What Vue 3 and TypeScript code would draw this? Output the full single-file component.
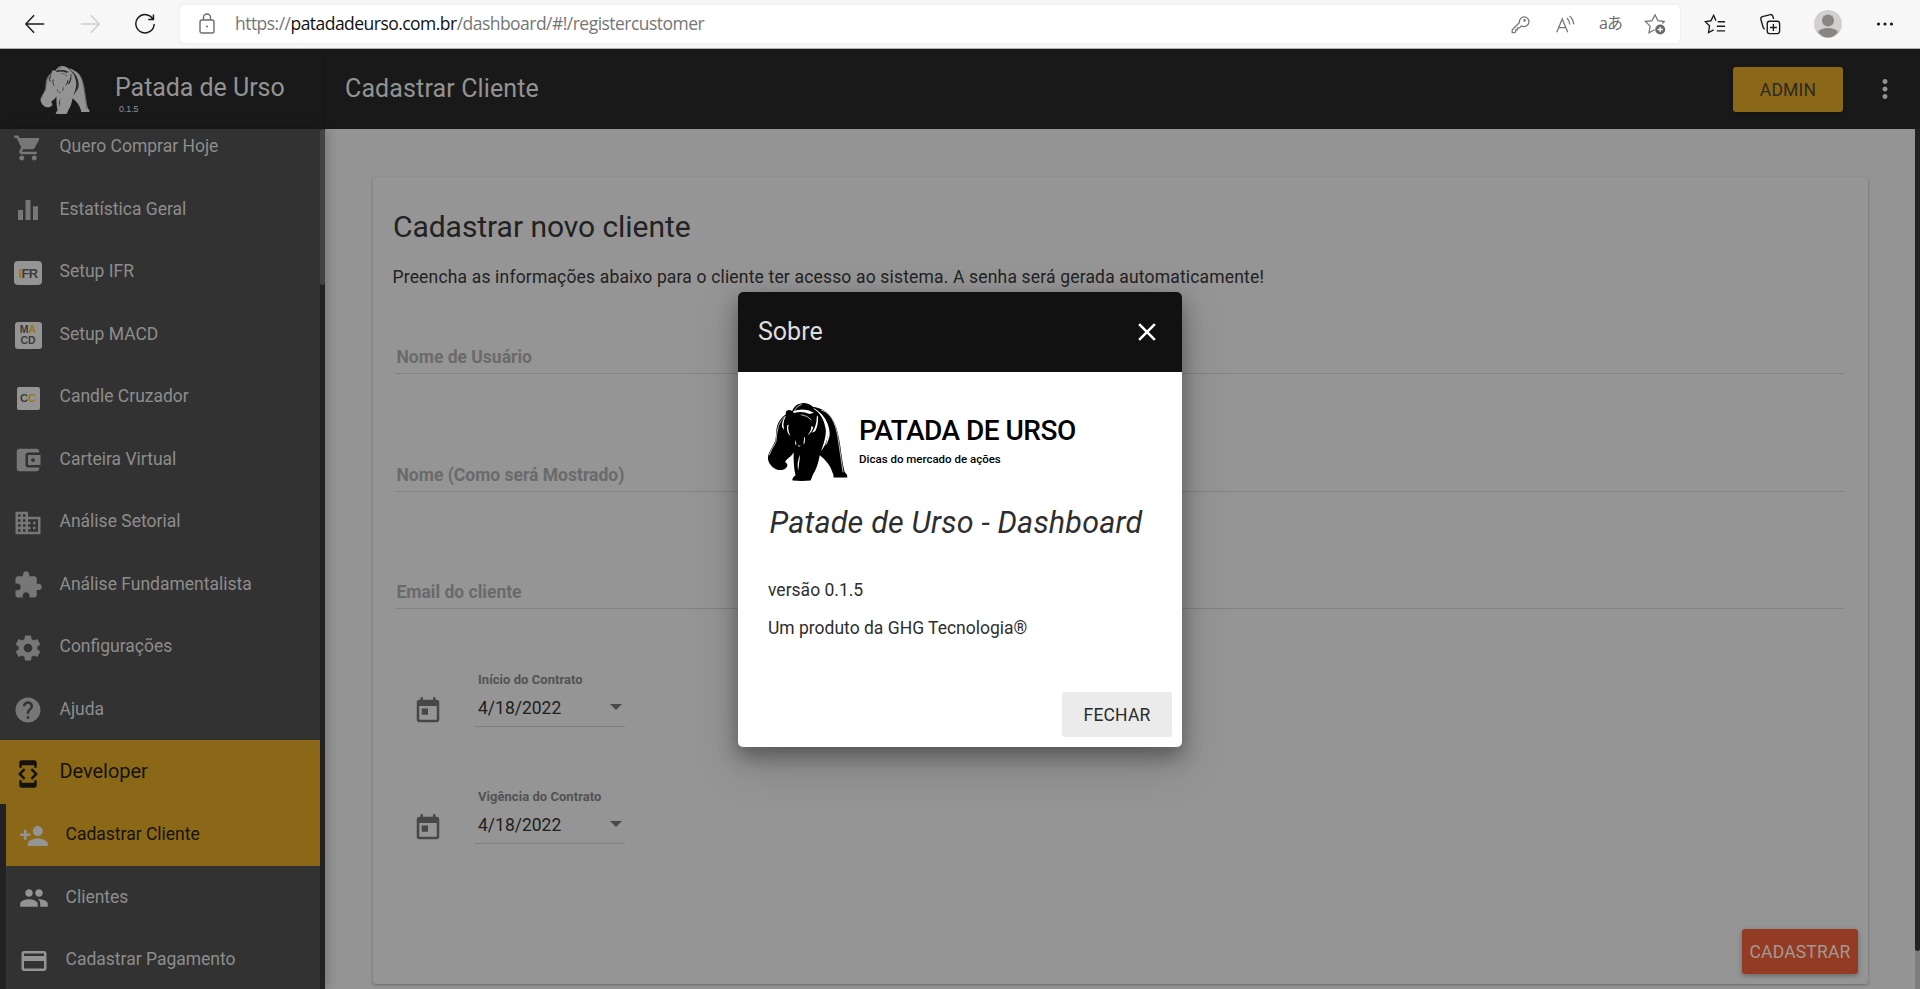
<script setup lang="ts">
interface NavItem {
  label: string
  path?: string
  tile?: 'ifr' | 'macd' | 'cc'
}

const items: NavItem[] = [
  { label: 'Quero Comprar Hoje', path: 'M7 18c-1.1 0-1.99.9-1.99 2S5.9 22 7 22s2-.9 2-2-.9-2-2-2zM1 2v2h2l3.6 7.59-1.35 2.45c-.16.28-.25.61-.25.96 0 1.1.9 2 2 2h12v-2H7.42c-.14 0-.25-.11-.25-.25l.03-.12.9-1.63h7.45c.75 0 1.41-.41 1.75-1.03l3.58-6.49c.08-.14.12-.31.12-.48 0-.55-.45-1-1-1H5.21l-.94-2H1zm16 16c-1.1 0-1.99.9-1.99 2s.89 2 1.99 2 2-.9 2-2-.9-2-2-2z' },
  { label: 'Estatística Geral', path: 'M4 20h4v-8H4v8zM10 20h4V4h-4v16zM16 9v11h4V9h-4z' },
  { label: 'Setup IFR', tile: 'ifr' },
  { label: 'Setup MACD', tile: 'macd' },
  { label: 'Candle Cruzador', tile: 'cc' },
  { label: 'Carteira Virtual', path: 'M21 18v1c0 1.1-.9 2-2 2H5c-1.11 0-2-.9-2-2V5c0-1.1.89-2 2-2h14c1.1 0 2 .9 2 2v1h-9c-1.11 0-2 .9-2 2v8c0 1.1.89 2 2 2h9zm-9-2h10V8H12v8zm4-2.5c-.83 0-1.5-.67-1.5-1.5s.67-1.5 1.5-1.5 1.5.67 1.5 1.5-.67 1.5-1.5 1.5z' },
  { label: 'Análise Setorial', path: 'M12 7V3H2v18h20V7H12zM6 19H4v-2h2v2zm0-4H4v-2h2v2zm0-4H4V9h2v2zm0-4H4V5h2v2zm4 12H8v-2h2v2zm0-4H8v-2h2v2zm0-4H8V9h2v2zm0-4H8V5h2v2zm10 12h-8v-2h2v-2h-2v-2h2v-2h-2V9h8v10zm-2-8h-2v2h2v-2zm0 4h-2v2h2v-2z' },
  { label: 'Análise Fundamentalista', path: 'M20.5 11H19V7c0-1.1-.9-2-2-2h-4V3.5C13 2.12 11.88 1 10.5 1S8 2.12 8 3.5V5H4c-1.1 0-1.99.9-1.99 2v3.8H3.5c1.49 0 2.7 1.21 2.7 2.7s-1.21 2.7-2.7 2.7H2V20c0 1.1.9 2 2 2h3.8v-1.5c0-1.49 1.21-2.7 2.7-2.7 1.49 0 2.7 1.21 2.7 2.7V22H17c1.1 0 2-.9 2-2v-4h1.5c1.38 0 2.5-1.12 2.5-2.5S21.88 11 20.5 11z' },
  { label: 'Configurações', path: 'M19.43 12.98c.04-.32.07-.64.07-.98s-.03-.66-.07-.98l2.11-1.65c.19-.15.24-.42.12-.64l-2-3.46c-.12-.22-.39-.3-.61-.22l-2.49 1c-.52-.4-1.08-.73-1.69-.98l-.38-2.65C14.46 2.18 14.25 2 14 2h-4c-.25 0-.46.18-.49.42l-.38 2.65c-.61.25-1.17.59-1.69.98l-2.49-1c-.23-.09-.49 0-.61.22l-2 3.46c-.13.22-.07.49.12.64l2.11 1.65c-.04.32-.07.65-.07.98s.03.66.07.98l-2.11 1.65c-.19.15-.24.42-.12.64l2 3.46c.12.22.39.3.61.22l2.49-1c.52.4 1.08.73 1.69.98l.38 2.65c.03.24.24.42.49.42h4c.25 0 .46-.18.49-.42l.38-2.65c.61-.25 1.17-.59 1.69-.98l2.49 1c.23.09.49 0 .61-.22l2-3.46c.12-.22.07-.49-.12-.64l-2.11-1.65zM12 15.5c-1.93 0-3.5-1.57-3.5-3.5s1.57-3.5 3.5-3.5 3.5 1.57 3.5 3.5-1.57 3.5-3.5 3.5z' },
  { label: 'Ajuda', path: 'M12 2C6.48 2 2 6.48 2 12s4.48 10 10 10 10-4.48 10-10S17.52 2 12 2zm1 17h-2v-2h2v2zm2.07-7.75l-.9.92C13.45 12.9 13 13.5 13 15h-2v-.5c0-1.1.45-2.1 1.17-2.83l1.24-1.26c.37-.36.59-.86.59-1.41 0-1.1-.9-2-2-2s-2 .9-2 2H8c0-2.21 1.79-4 4-4s4 1.79 4 4c0 .88-.36 1.68-.93 2.25z' },
]

const children = [
  { label: 'Cadastrar Cliente', active: true, path: 'M15 12c2.21 0 4-1.79 4-4s-1.79-4-4-4-4 1.79-4 4 1.79 4 4 4zm-9-2V7H4v3H1v2h3v3h2v-3h3v-2H6zm9 4c-2.67 0-8 1.34-8 4v2h16v-2c0-2.66-5.33-4-8-4z' },
  { label: 'Clientes', active: false, path: 'M16 11c1.66 0 2.99-1.34 2.99-3S17.66 5 16 5c-1.66 0-3 1.34-3 3s1.34 3 3 3zm-8 0c1.66 0 2.99-1.34 2.99-3S9.66 5 8 5C6.34 5 5 6.34 5 8s1.34 3 3 3zm0 2c-2.33 0-7 1.17-7 3.5V19h14v-2.5c0-2.33-4.67-3.5-7-3.5zm8 0c-.29 0-.62.02-.97.05 1.16.84 1.97 1.97 1.97 3.45V19h6v-2.5c0-2.33-4.67-3.5-7-3.5z' },
  { label: 'Cadastrar Pagamento', active: false, path: 'M20 4H4c-1.11 0-1.99.89-1.99 2L2 18c0 1.11.89 2 2 2h16c1.11 0 2-.89 2-2V6c0-1.11-.89-2-2-2zm0 14H4v-6h16v6zm0-10H4V6h16v2z' },
]

const fields = ['Nome de Usuário', 'Nome (Como será Mostrado)', 'Email do cliente']
const dates = [
  { label: 'Início do Contrato', value: '4/18/2022' },
  { label: 'Vigência do Contrato', value: '4/18/2022' },
]
</script>

<template>
  <div class="window">
    <svg class="defs" width="0" height="0">
      <symbol id="bear" viewBox="22 20 247 241">
        <path class="fur" d="M130 22C142 21 154 26 163 34C182 36 203 45 216 62C232 82 240 115 245 150C250 185 254 215 259 232Q268 240 267 249L225 249Q226 241 222 234C216 214 202 196 183 181C180 196 176 214 168 230C161 240 160 248 155 258Q128 261 100 258Q97 251 109 242C104 222 103 200 103 172C98 182 91 187 84 192Q77 197 78 203Q87 207 83 215Q78 225 66 226C47 228 29 212 25 193C23 176 38 160 47 137C51 120 49 104 53 91C59 74 70 63 79 57Q78 44 88 43Q95 43 99 46C103 33 116 22 130 22Z" />
        <path class="cut" d="M101 47Q135 34 165 51L152 55Q128 45 105 52Z" />
        <path class="cut" d="M167 38C194 55 215 82 208 119C204 143 195 157 187 168C196 144 203 120 201 102C197 72 183 50 163 38Z" />
        <path class="cut" d="M180 49C201 67 215 95 213 120C211 133 205 145 200 153C205 137 209 119 207 101C204 81 193 62 180 49Z" />
        <path class="cut" d="M177 60Q180 86 169 108L159 112Q174 91 174 62Z" />
        <path class="cut" d="M76 64Q66 79 68 95L74 104L72 87Q73 72 80 61Z" />
        <path class="cut" d="M84 89Q81 105 87 115L94 122Q84 105 88 88Z" />
        <path class="cut" d="M158 91L163 96Q159 108 153 114L145 121Q156 109 158 91Z" />
        <path class="cut" d="M107 133L112 145L109 151ZM138 124L137 143L133 148L135 128ZM114 148Q120 153 127 151L119 155Z" />
        <path class="cut" d="M123 179Q112 203 117 228Q120 205 123 179Z" />
        <path class="cut-line" d="M187 43C225 53 235 100 241 144L254 233M29 180Q34 165 49 141Q51 112 57 91Q64 74 77 62M104 51Q110 31 128 26M125 57Q146 60 157 73" />
      </symbol>
    </svg>

    <div class="browser">
      <svg class="nav-icon back" viewBox="0 0 24 24"><path d="M22 12H2M11 2.5L2 12l9 9.500" /></svg>
      <svg class="nav-icon forward" viewBox="0 0 24 24"><path d="M2 12h20M13 2.500l9 9.500-9 9.500" /></svg>
      <svg class="nav-icon reload" viewBox="0 0 24 24"><path d="M20.800 7A10 10 0 1 0 22 12M21.200 1.500V7.200H15.500" /></svg>
      <div class="address">
        <svg class="lock" viewBox="0 0 16 21"><rect x="1" y="7" width="14" height="13" rx="2" /><path d="M4.500 7V4.500a3.500 3.500 0 0 1 7 0V7" /><circle cx="8" cy="13.500" r="1" /></svg>
        <span class="url">https://<b>patadadeurso.com.br</b>/dashboard/#!/registercustomer</span>
        <div class="address-tools">
          <svg viewBox="0 0 24 24"><path d="M11.400 10.300A5.200 5.200 0 1 1 15 14.500l-1.500-.4-2 2.200H9.300V18.500H7.200V20.600L5.900 21.500H3.500V18.300z" /><circle cx="17" cy="8" r=".8" /></svg>
          <svg viewBox="0 0 24 24"><path d="M3 21L9 6.500 15 21M5.200 16h7.600M14 5.500q3 2.500 3.300 7M17 3.200q4 3.300 4.400 9" /></svg>
          <span class="translate">aあ</span>
          <svg viewBox="0 0 24 24"><path d="M11.500 18.300L5.500 21.500 6.700 14.300 1.500 9.300 8.700 8.300 12 2 15.200 8.300 22 9.300 20 11.500" /><circle class="solid" cx="17.700" cy="18" r="5.500" /><path class="plus" d="M14.900 18h5.600M17.700 15.200v5.600" /></svg>
        </div>
      </div>
      <div class="browser-tools">
        <svg viewBox="0 0 24 24"><path d="M13 8.300L10.500 2.500 7.500 8.500 1.500 9.400 6 14 5 21.300 10.500 18.300M15 9.500h8M14 14.500h9M14 19.500h9" /></svg>
        <svg viewBox="0 0 24 24"><rect x="9" y="9" width="13.500" height="13.500" rx="2.500" /><path d="M15.700 12v7.500M12 15.800h7.500M6.300 17.500Q5 17 4.500 15.500L2 6.800Q1.600 4.600 3.700 3.900L12.500 1.700Q14.300 1.500 15 3.200L16 6.500" /></svg>
        <svg class="avatar" viewBox="0 0 28 28"><circle class="avatar-bg" cx="14" cy="14" r="14" /><circle class="avatar-fg" cx="14" cy="10.500" r="6" /><path class="avatar-fg" d="M4 22Q7 18 14 18T24 22Q20 27.500 14 27.500T4 22Z" /></svg>
        <svg class="more" viewBox="0 0 24 24"><circle cx="5.500" cy="12" r="1.600" /><circle cx="12" cy="12" r="1.600" /><circle cx="18.500" cy="12" r="1.600" /></svg>
      </div>
    </div>

    <header class="topbar">
      <div class="brand">
        <svg class="brand-logo"><use href="#bear" /></svg>
        <div class="brand-text">
          <span class="brand-name">Patada de Urso</span>
          <span class="brand-version">0.1.5</span>
        </div>
      </div>
      <h1>Cadastrar Cliente</h1>
      <button class="admin">ADMIN</button>
      <svg class="kebab" viewBox="0 0 24 24"><path d="M12 8c1.100 0 2-.9 2-2s-.9-2-2-2-2 .9-2 2 .9 2 2 2zm0 2c-1.100 0-2 .9-2 2s.9 2 2 2 2-.9 2-2-.9-2-2-2zm0 6c-1.100 0-2 .9-2 2s.9 2 2 2 2-.9 2-2-.9-2-2-2z" /></svg>
    </header>

    <div class="body">
      <nav class="sidebar">
        <div class="menu">
          <div v-for="item in items" :key="item.label" class="item">
            <span class="icon">
              <svg v-if="item.path" viewBox="0 0 24 24"><path :d="item.path" /></svg>
              <span v-else-if="item.tile === 'ifr'" class="tile ifr"><i>I</i>FR</span>
              <span v-else-if="item.tile === 'macd'" class="tile macd"><span>M<i>A</i></span><span>CD</span></span>
              <span v-else class="tile cc">C<i>C</i></span>
            </span>
            <span class="label">{{ item.label }}</span>
          </div>
          <div class="item developer">
            <span class="icon"><svg viewBox="0 0 24 24"><path d="M7 5h10v2h2V3c0-1.100-.9-1.990-2-1.990L7 1c-1.100 0-2 .9-2 2v4h2V5zm8.410 11.590L20 12l-4.590-4.590L14 8.830 17.170 12 14 15.170l1.410 1.420zM10 15.170L6.830 12 10 8.830 8.590 7.410 4 12l4.590 4.590L10 15.170zM17 19H7v-2H5v4c0 1.100.9 2 2 2h10c1.100 0 2-.9 2-2v-4h-2v2z" /></svg></span>
            <span class="label">Developer</span>
          </div>
          <div class="submenu">
            <div v-for="c in children" :key="c.label" class="item" :class="{ active: c.active }">
              <span class="icon"><svg viewBox="0 0 24 24"><path :d="c.path" /></svg></span>
              <span class="label">{{ c.label }}</span>
            </div>
          </div>
        </div>
        <div class="track"><div class="thumb"></div></div>
      </nav>

      <main class="content">
        <section class="card">
          <h2>Cadastrar novo cliente</h2>
          <p class="intro">Preencha as informações abaixo para o cliente ter acesso ao sistema. A senha será gerada automaticamente!</p>
          <div class="fields">
            <div v-for="f in fields" :key="f" class="field">{{ f }}</div>
          </div>
          <div class="dates">
            <div v-for="d in dates" :key="d.label" class="date-row">
              <svg class="calendar" viewBox="0 0 24 24"><path d="M19 3h-1V1h-2v2H8V1H6v2H5c-1.110 0-1.990.9-1.990 2L3 19c0 1.100.89 2 2 2h14c1.100 0 2-.9 2-2V5c0-1.100-.9-2-2-2zm0 16H5V8h14v11zM7 10h5v5H7z" /></svg>
              <div class="date">
                <span class="date-label">{{ d.label }}</span>
                <div class="date-value"><span>{{ d.value }}</span><span class="caret"></span></div>
              </div>
            </div>
          </div>
          <button class="submit">CADASTRAR</button>
        </section>
      </main>
      <div class="page-track"><div class="page-thumb"></div></div>
    </div>

    <div class="dialog">
      <div class="dialog-head">
        <span>Sobre</span>
        <svg viewBox="0 0 24 24"><path d="M19 6.410L17.590 5 12 10.590 6.410 5 5 6.410 10.590 12 5 17.590 6.410 19 12 13.410 17.590 19 19 17.590 13.410 12z" /></svg>
      </div>
      <div class="dialog-body">
        <div class="logo">
          <svg class="logo-bear"><use href="#bear" /></svg>
          <div class="logo-text"><strong>PATADA DE URSO</strong><span>Dicas do mercado de ações</span></div>
        </div>
        <h3>Patade de Urso - Dashboard</h3>
        <p>versão 0.1.5</p>
        <p>Um produto da GHG Tecnologia®</p>
      </div>
      <div class="dialog-actions"><button>FECHAR</button></div>
    </div>
  </div>
</template>

<style>
body { margin: 0; overflow: hidden; }
</style>

<style scoped>
.window { position: relative; display: flex; flex-direction: column; width: 1920px; height: 989px; overflow: hidden; font-family: Roboto, "Liberation Sans", sans-serif; font-size: 17.5px; background: #949494; }
.window * { box-sizing: border-box; }
.defs { position: absolute; }
.fur { fill: var(--fur); }
.cut { fill: var(--cut); }
.cut-line { fill: none; stroke: var(--cut); stroke-width: 2.2; }
h1, h2, h3, p { margin: 0; font-weight: 400; }
button { border: 0; font: inherit; letter-spacing: .175px; border-radius: 3px; height: 45px; padding: 0; }

.browser { flex: none; display: flex; align-items: center; height: 49px; background: #f7f7f7; border-bottom: 1px solid #b1b3b3; }
.nav-icon { width: 22px; height: 22px; fill: none; stroke: #1b1b1b; stroke-width: 1.6; flex: none; margin-top: -1px; }
.back { margin-left: 24px; }
.forward { margin-left: 33px; stroke: #cfcfcf; }
.reload { margin-left: 33px; }
.address { display: flex; align-items: center; width: 1500px; height: 38px; margin-left: 24px; padding: 0 14px 0 19px; background: #fff; border-radius: 5px; box-shadow: 0 0 3px rgba(0,0,0,.08); }
.lock { width: 16px; height: 21px; margin-top: -1px; fill: none; stroke: #6c6c6c; stroke-width: 1.4; }
.lock circle { fill: #6c6c6c; stroke: none; }
.url { margin: -2px 0 0 20px; font-family: "Open Sans", "Noto Sans", sans-serif; font-size: 17.5px; letter-spacing: -.53px; color: #767676; white-space: nowrap; }
.url b { font-weight: 400; color: #111; }
.address-tools { display: flex; align-items: center; gap: 23px; margin-left: auto; }
.address-tools svg { width: 22px; height: 22px; fill: none; stroke: #767676; stroke-width: 1.4; }
.address-tools svg .solid { fill: #6b6b6b; stroke: none; }
.address-tools svg .plus { stroke: #fff; stroke-width: 1.4; }
.translate { width: 22px; margin-top: -3px; font: 16px/20px "Open Sans", "Noto Sans CJK JP", sans-serif; letter-spacing: -1px; color: #6b6b6b; white-space: nowrap; }
.browser-tools { display: flex; align-items: center; margin-left: 24px; }
.browser-tools svg { width: 22px; height: 22px; fill: none; stroke: #1b1b1b; stroke-width: 1.5; }
.browser-tools svg + svg { margin-left: 33px; }
.browser-tools .more { width: 24px; height: 24px; margin-left: 31px; fill: #1b1b1b; stroke: none; }
.browser-tools .avatar { width: 28px; height: 28px; stroke: none; }
.avatar-bg { fill: #d2d0ce; }
.avatar-fg { fill: #8a8583; }

.topbar { position: relative; z-index: 1; flex: none; display: flex; align-items: center; height: 80px; background: #191919; color: #939393; }
.brand { display: flex; align-items: center; width: 325px; height: 80px; padding-left: 40px; border-right: 1px solid #161616; }
.brand-logo { --fur: #939393; --cut: #222; width: 50px; height: 50px; margin-top: 2px; }
.brand-text { display: flex; flex-direction: column; margin-left: 25px; padding-top: 10px; }
.brand-name { font-size: 25px; line-height: 30px; letter-spacing: -.05px; }
.brand-version { font: 8.75px/12px "Liberation Sans", sans-serif; padding: 0 0 1px 4px; }
h1 { margin-left: 20px; font-size: 25px; line-height: 30px; letter-spacing: .125px; }
.admin { width: 110px; margin-left: auto; padding-top: 1px; background: #8b6817; color: #2b2a24; box-shadow: 0 2px 5px rgba(0,0,0,.26); }
.kebab { width: 30px; height: 30px; margin: 0 20px 0 27px; fill: #939393; }

.body { flex: 1; display: flex; min-height: 0; }
.sidebar { position: relative; z-index: 1; display: flex; width: 325px; background: #323232; box-shadow: 2px 0 10px rgba(0,0,0,.22); }
.menu { width: 320px; margin-top: -14px; }
.item { display: flex; align-items: center; height: 62.5px; color: #8d8d8d; }
.icon { display: flex; justify-content: center; width: 56px; padding-top: 3px; fill: #777; }
.icon svg { width: 30px; height: 30px; }
.label { margin-left: 3.5px; white-space: nowrap; }
.developer { height: 63.5px; background: #8b6817; color: #15130f; font-size: 20px; letter-spacing: -.05px; }
.developer .icon { fill: #15130f; padding-top: 4px; }
.developer .label { padding-bottom: 1px; }
.submenu { border-left: 6px solid #222; }
.submenu .icon { fill: #949494; padding-top: 2px; }
.submenu .label { padding-bottom: 1px; }
.active { background: #8b6817; color: #15130f; }
.tile { display: flex; align-items: center; justify-content: center; background: #949494; color: #3c3c3c; border-radius: 4px; font: bold 13px/13px "Liberation Sans", sans-serif; }
.tile i { font-style: normal; color: #9a7618; }
.ifr { width: 28px; height: 24px; margin-top: 1px; letter-spacing: -.6px; }
.macd { flex-direction: column; width: 27px; height: 27px; border-radius: 3px; font-size: 10.5px; }
.macd span { height: 11px; line-height: 11px; }
.cc { width: 23px; height: 23px; margin-top: 1px; border-radius: 2px; font-size: 11px; }
.track { width: 5px; background: #222; }
.thumb { height: 156px; background: #424242; border-radius: 3px; }

.content { flex: 1; padding: 48px 47px 5px 48px; }
.card { position: relative; display: flex; flex-direction: column; height: 807px; padding: 32px 24px 0 20px; background: #959595; border-radius: 3px; box-shadow: 0 1px 3px rgba(0,0,0,.3); color: #222; }
h2 { font-size: 30px; line-height: 36px; letter-spacing: -.05px; }
.intro { margin: 20px 0 0 -.5px; line-height: 24px; letter-spacing: .17px; white-space: nowrap; }
.fields { margin: 0 0 0 2px; }
.field { height: 117.5px; padding: 0 0 4px 1.5px; display: flex; align-items: flex-end; border-bottom: 1px solid #828282; color: #6a6a6a; font-weight: 700; line-height: 24px; }
.field:first-child { height: 85px; }
.dates { margin: 61px 0 0 20px; display: flex; flex-direction: column; gap: 60px; }
.date-row { display: flex; height: 57px; }
.calendar { width: 30px; height: 30px; margin-top: 26px; fill: #474747; }
.date { width: 150px; margin-left: 32px; border-bottom: 1px solid #7f7f7f; }
.date-label { display: block; height: 20px; padding-left: 3px; color: #525252; font-size: 13px; line-height: 20px; font-weight: 700; letter-spacing: .04px; }
.date-value { display: flex; align-items: center; justify-content: space-between; padding: 6px 3px 0; line-height: 25px; color: #202020; }
.caret { border: 6.5px solid transparent; border-top: 6px solid #4a4a4a; border-bottom: 0; margin-top: -3px; }
.submit { position: absolute; right: 10px; bottom: 10px; width: 116px; background: #933c23; color: #a39894; box-shadow: 0 2px 5px rgba(0,0,0,.3); }
.page-track { width: 5px; background: #7d7d7d; }
.page-thumb { height: 822px; background: #222; border-radius: 0 0 3px 3px; }

.dialog { position: absolute; z-index: 5; left: 738px; top: 292px; display: flex; flex-direction: column; width: 444px; height: 455px; background: #fff; border-radius: 5px; overflow: hidden; box-shadow: 0 9px 19px 1px rgba(0,0,0,.32), 0 17px 48px 3px rgba(0,0,0,.14); color: #2e2e2e; }
.dialog-head { display: flex; align-items: center; justify-content: space-between; flex: none; height: 80px; padding: 0 20px; background: #111; color: #dedede; font-size: 25px; }
.dialog-head span { padding-bottom: 1px; }
.dialog-head svg { width: 30px; height: 30px; fill: #fff; }
.dialog-body { flex: 1; padding: 30px 31px 0 30px; }
.logo { display: flex; align-items: flex-start; height: 80px; }
.logo-bear { --fur: #000; --cut: #fff; width: 81px; height: 80px; margin-left: -1px; }
.logo-text { display: flex; flex-direction: column; margin: 13px 0 0 11px; color: #000; }
.logo-text strong { font-size: 28px; line-height: 32px; font-weight: 500; letter-spacing: -.5px; white-space: nowrap; }
.logo-text span { margin-top: 4px; font-size: 11.5px; line-height: 16px; font-weight: 500; white-space: nowrap; }
h3 { margin: 23px 0 0 1.5px; font-size: 30.5px; line-height: 36px; font-style: italic; letter-spacing: .2px; white-space: nowrap; }
.dialog-body p { line-height: 25px; margin-top: 12.5px; }
.dialog-body h3 + p { margin-top: 37px; }
.dialog-actions { display: flex; justify-content: flex-end; padding: 0 10px 10px; }
.dialog-actions button { width: 110px; background: #ebebeb; color: #2b2b2b; }
</style>
